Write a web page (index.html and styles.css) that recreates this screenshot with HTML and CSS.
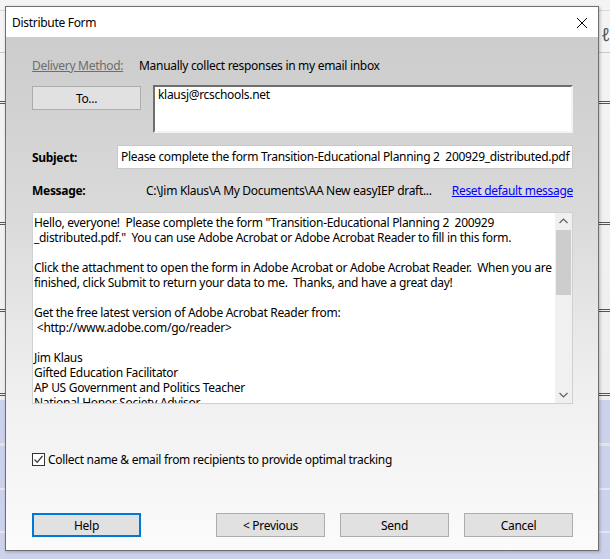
FILE: index.html
```html
<!DOCTYPE html>
<html>
    <head>
        <title>Distribute Form</title>
        <link rel="stylesheet" href="styles.css">
    </head>
    <body>
        <div class="desk">
            <span class="desk-glyph">ℓ</span>
        </div>
        <div class="dialog">
            <div class="titlebar">
                <span class="title">Distribute Form</span>
                <svg class="close" width="12" height="12" viewBox="0 0 12 12">
                    <path d="M1 1 L11 11 M11 1 L1 11" stroke="#000" stroke-width="1" fill="none"/>
                </svg>
            </div>
            <div class="body">
                <div class="row delivery">
                    <span class="muted">Delivery Method:</span>
                    <span class="delivery-value">Manually collect responses in my email inbox</span>
                </div>
                <div class="row to-row">
                    <button class="btn to-btn">To...</button>
                    <div class="field email">klausj@rcschools.net</div>
                </div>
                <div class="row subject-row">
                    <span class="label">Subject:</span>
                    <div class="field subject">Please complete the form Transition-Educational Planning 2  200929_distributed.pdf</div>
                </div>
                <div class="row message-row">
                    <span class="label">Message:</span>
                    <span class="path">C:\Jim Klaus\A My Documents\AA New easyIEP draft...</span>
                    <a class="reset" href="#">Reset default message</a>
                </div>
                <div class="message">
                    <div class="message-text">Hello, everyone!  Please complete the form "Transition-Educational Planning 2  200929
_distributed.pdf."  You can use Adobe Acrobat or Adobe Acrobat Reader to fill in this form.

Click the attachment to open the form in Adobe Acrobat or Adobe Acrobat Reader.  When you are
finished, click Submit to return your data to me.  Thanks, and have a great day!

Get the free latest version of Adobe Acrobat Reader from:
 &lt;http://www.adobe.com/go/reader&gt;

Jim Klaus
Gifted Education Facilitator
AP US Government and Politics Teacher
National Honor Society Advisor</div>
                    <div class="scrollbar">
                        <svg class="arrow" width="17" height="17" viewBox="0 0 17 17">
                            <path d="M4.5 10 L8.5 6 L12.5 10" stroke="#606060" stroke-width="1.2" fill="none"/>
                        </svg>
                        <div class="track">
                            <div class="thumb"></div>
                        </div>
                        <svg class="arrow" width="17" height="17" viewBox="0 0 17 17">
                            <path d="M4.5 7 L8.5 11 L12.5 7" stroke="#606060" stroke-width="1.2" fill="none"/>
                        </svg>
                    </div>
                </div>
                <label class="row check-row">
                    <span class="check">
                        <svg width="11" height="11" viewBox="0 0 11 11">
                            <path d="M1.5 5.5 L4.2 8.3 L9.5 2" stroke="#333" stroke-width="1.2" fill="none"/>
                        </svg>
                    </span>
                    <span>Collect name &amp; email from recipients to provide optimal tracking</span>
                </label>
                <div class="row buttons">
                    <button class="btn help">Help</button>
                    <div class="right-buttons">
                        <button class="btn">&lt; Previous</button>
                        <button class="btn">Send</button>
                        <button class="btn">Cancel</button>
                    </div>
                </div>
            </div>
        </div>
    </body>
</html>
```

FILE: styles.css
```css
html, body {
    margin: 0;
    padding: 0;
}
body {
    width: 610px;
    height: 559px;
    overflow: hidden;
    position: relative;
    font-family: "Noto Sans", "Liberation Sans", sans-serif;
    font-size: 12px;
    letter-spacing: -0.3px;
    color: #000;
    background: #f2f2f2;
}

/* the window behind the dialog */
.desk {
    position: absolute;
    left: 0; top: 0; right: 0; bottom: 0;
    background:
        linear-gradient(#d9d9d9, #d9d9d9) 0 10px / 100% 1px no-repeat,
        linear-gradient(#c8c8c8, #c8c8c8) 0 52px / 100% 1px no-repeat,
        linear-gradient(#555, #555) 0 101px / 100% 1px no-repeat,
        linear-gradient(#555, #555) 0 103px / 100% 1px no-repeat,
        linear-gradient(#555, #555) 0 222px / 100% 1px no-repeat,
        linear-gradient(#555, #555) 0 224px / 100% 1px no-repeat,
        linear-gradient(#555, #555) 0 309px / 100% 1px no-repeat,
        linear-gradient(#555, #555) 0 311px / 100% 1px no-repeat,
        linear-gradient(#555, #555) 0 393px / 100% 1px no-repeat,
        linear-gradient(#555, #555) 0 395px / 100% 1px no-repeat,
        linear-gradient(#e4e4e4, #e4e4e4) 0 443px / 100% 3px no-repeat,
        linear-gradient(#e4e6f2, #e4e6f2) 0 488px / 100% 2px no-repeat,
        linear-gradient(#e4e6f2, #e4e6f2) 0 531px / 100% 2px no-repeat,
        linear-gradient(#cdd2ec, #cdd2ec) 0 400px / 100% 159px no-repeat,
        linear-gradient(#f4f4f4, #ececec);
}
.desk-glyph {
    position: absolute;
    left: 601px;
    top: 22px;
    font-size: 18px;
    color: #555;
    font-style: italic;
}

.dialog {
    position: absolute;
    left: 5px;
    top: 6px;
    width: 592px;
    height: 543px;
    border: 1px solid #6f6f6f;
    display: flex;
    flex-direction: column;
    box-shadow: 1px 1px 3px rgba(0, 0, 0, 0.25);
}
.titlebar {
    height: 30px;
    background: #fff;
    display: flex;
    align-items: center;
    justify-content: space-between;
    padding: 0 10px 0 6px;
    flex-shrink: 0;
}
.title {
    font-size: 12px;
}
.close {
    margin-top: 1px;
}
.body {
    flex: 1;
    background: linear-gradient(#cccccc, #dadada 35%, #f0f0f0 70%, #fbfbfb);
    padding: 0 25px 0 26px;
    display: flex;
    flex-direction: column;
}
.row {
    display: flex;
    align-items: center;
    white-space: nowrap;
}
.delivery {
    margin-top: 20px;
    height: 17px;
}
.muted {
    color: #6d6d6d;
    text-decoration: underline;
    width: 107px;
}
.to-row {
    margin-top: 11px;
    align-items: flex-start;
    justify-content: space-between;
}
.btn {
    font-family: inherit;
    font-size: 12px;
    letter-spacing: -0.3px;
    color: #000;
    background: #e1e1e1;
    border: 1px solid #adadad;
    width: 109px;
    height: 24px;
    padding: 0;
}
.to-btn {
    margin-top: 1px;
}
.field {
    background: #fff;
    box-sizing: border-box;
    white-space: pre;
    overflow: hidden;
}
.email {
    width: 420px;
    height: 48px;
    border: 2px solid;
    border-color: #6e6e6e #f3f3f3 #f3f3f3 #6e6e6e;
    padding: 0 3px;
    line-height: 16px;
}
.subject-row {
    margin-top: 12px;
}
.label {
    font-weight: bold;
    width: 85px;
}
.subject {
    width: 456px;
    height: 24px;
    border: 1px solid #c8c8c8;
    padding: 0 3px;
    line-height: 22px;
}
.message-row {
    margin-top: 13px;
    height: 17px;
}
.message-row .label {
    width: 114px;
}
.path {
    flex: 1;
}
.reset {
    color: #0000ff;
}
.message {
    margin-top: 13px;
    height: 192px;
    box-sizing: border-box;
    border: 1px solid #d0d0d0;
    background: #fff;
    display: flex;
}
.message-text {
    flex: 1;
    white-space: pre;
    overflow: hidden;
    padding: 2px 0 0 1px;
    line-height: 15px;
}
.scrollbar {
    width: 17px;
    background: #f0f0f0;
    display: flex;
    flex-direction: column;
}
.arrow {
    display: block;
}
.track {
    flex: 1;
}
.thumb {
    height: 65px;
    background: #cdcdcd;
    margin: 0 1px;
}
.check-row {
    margin-top: 48px;
    height: 15px;
}
.check {
    width: 11px;
    height: 11px;
    border: 1px solid #333;
    background: #fff;
    margin-right: 3px;
    display: flex;
}
.buttons {
    margin-top: 46px;
    justify-content: space-between;
}
.help {
    border: 2px solid #0078d7;
}
.right-buttons {
    display: flex;
    gap: 15px;
}
```
